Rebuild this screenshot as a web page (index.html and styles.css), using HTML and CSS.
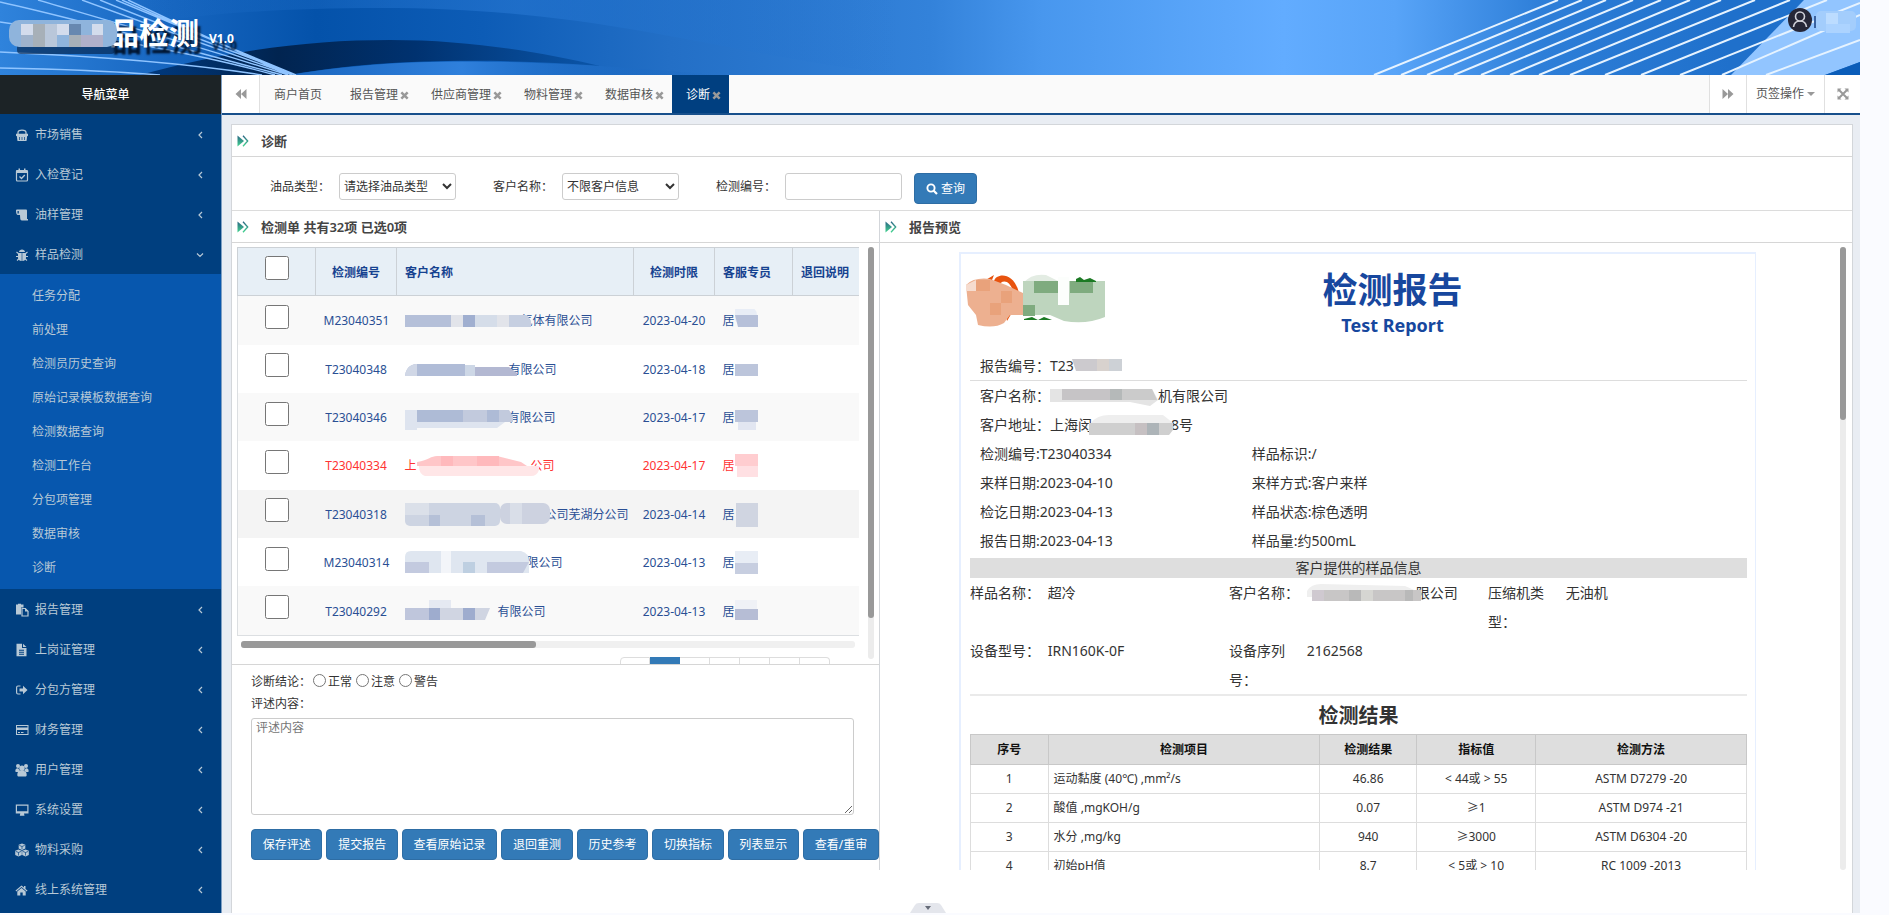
FILE: index.html
```html
<!DOCTYPE html>
<html lang="zh-CN">
<head>
<meta charset="utf-8">
<title>品检测 V1.0</title>
<link rel="stylesheet" href="styles.css">
</head>
<body>
<svg class="defs" aria-hidden="true">
  <symbol id="i-basket" viewBox="0 0 14 14"><path d="M3 6V4.500C3 1.200 11 1.200 11 4.500V6M1 6.500H13" fill="none" stroke="currentColor" stroke-width="1.300"/><path d="M1 6.500H13V8H1ZM1.800 8H12.200L11.500 13H2.500Z"/><path d="M4.500 9V12M7 9V12M9.500 9V12" stroke="#003f7f" stroke-width=".7"/></symbol>
  <symbol id="i-cal" viewBox="0 0 14 14"><rect x="1.500" y="2.500" width="11" height="10.500" rx="1" fill="none" stroke="currentColor" stroke-width="1.200"/><path d="M1 2.500H13V5H1ZM3.500 .5H5V4H3.500ZM9 .5H10.500V4H9Z"/><path d="M4.500 8.500L6.500 10.500L9.800 7" fill="none" stroke="currentColor" stroke-width="1.300"/></symbol>
  <symbol id="i-scroll" viewBox="0 0 14 14"><path d="M1 2.500C1 1.600 1.600 1.500 2.500 1.500H11C11.800 1.500 12 2 12 3V11H13V12.500H7C5.500 12.500 5.300 11.500 5.200 10L5 7H3C1.500 7 1 5 1 2.500ZM2.500 3V5.500H3.800V3Z" fill-rule="evenodd"/></symbol>
  <symbol id="i-bug" viewBox="0 0 14 14"><path d="M4 4C4 .6 10 .6 10 4ZM3 5H6.700V13C4.300 12.800 3 11.500 3 9.500ZM7.300 5H11V9.500C11 11.500 9.700 12.800 7.300 13Z"/><path d="M1.500 4L4 6M12.500 4L10 6M1 8.500H4M13 8.500H10M2 12.500L4.300 10.500M12 12.500L9.700 10.500" stroke="currentColor" stroke-width="1.100"/></symbol>
  <symbol id="i-paste" viewBox="0 0 14 14"><path d="M1 1.500H3V.8H6V1.500H8.500V4.500H6V11.500H1Z"/><path d="M7 5.500H10.300L13 8.200V13H7Z" fill="none" stroke="currentColor" stroke-width="1.200"/><path d="M10 5V8.500H13.500Z"/></symbol>
  <symbol id="i-file" viewBox="0 0 14 14"><path d="M1.500 .8H7V5H11.500V13.200H1.500ZM8 .8L11.500 4H8ZM4 6.800V7.700H9V6.800ZM4 8.800V9.700H9V8.800ZM4 10.800V11.700H9V10.800Z" fill-rule="evenodd"/></symbol>
  <symbol id="i-out" viewBox="0 0 14 14"><path d="M5.500 3H3C2 3 1.600 3.600 1.600 4.500V9.500C1.600 10.500 2 11 3 11H5.500" fill="none" stroke="currentColor" stroke-width="1.200"/><path d="M4.500 5.500H8V2.800L12.500 7L8 11.200V8.500H4.500Z"/></symbol>
  <symbol id="i-card" viewBox="0 0 14 14"><path d="M1 2H13.500V12H1ZM2 3V4.500H12.500V3ZM2 7V11H12.500V7ZM3 9H5V10H3ZM6 9H8.500V10H6Z" fill-rule="evenodd"/></symbol>
  <symbol id="i-users" viewBox="0 0 14 14"><circle cx="3" cy="3" r="2"/><circle cx="11" cy="3" r="2"/><circle cx="7" cy="5.200" r="2.700"/><path d="M.3 8.500C.3 6 1.300 5 3.200 5.200L5 8C3.800 8.200 3.300 8.500 3 9H1ZM13.700 8.500C13.700 6 12.700 5 10.800 5.200L9 8C10.200 8.200 10.700 8.500 11 9H13ZM2.300 12C2.300 9.500 3.300 8 5 7.600H9C10.700 8 11.700 9.500 11.700 12C11.700 13 11 13.500 10 13.500H4C3 13.500 2.300 13 2.300 12Z"/></symbol>
  <symbol id="i-desk" viewBox="0 0 14 14"><path d="M.8 1.500H13.500V10.500H9L9.500 12.700H4.800L5.300 10.500H.8ZM2 2.700V8.300H12.300V2.700Z" fill-rule="evenodd"/></symbol>
  <symbol id="i-cubes" viewBox="0 0 14 14"><path d="M7 .5L10.300 1.800V5.500L7 7L3.700 5.500V1.800ZM3.500 6.500L6.800 7.800V11.900L3.500 13.400L.2 11.900V7.800ZM10.500 6.500L13.800 7.800V11.900L10.500 13.400L7.200 11.900V7.800Z"/><path d="M4.300 2.400L7 3.500L9.700 2.400M7 3.500V6M.8 8.400L3.500 9.500L6.200 8.400M3.500 9.500V12.500M7.800 8.400L10.500 9.500L13.200 8.400M10.500 9.500V12.500" fill="none" stroke="#003f7f" stroke-width=".7"/></symbol>
  <symbol id="i-home" viewBox="0 0 14 14"><path d="M6.500 2.500L9 4.600V3H10.500V6L12.500 7.600L11.800 8.400L6.500 4L1.200 8.400L.5 7.600ZM2.300 8.500L6.500 5L10.700 8.500V12.500H7.700V9.500H5.300V12.500H2.300Z"/></symbol>
  <symbol id="i-left" viewBox="0 0 14 14"><path d="M9 4L6 7L9 10" fill="none" stroke="currentColor" stroke-width="1.200"/></symbol>
  <symbol id="i-down" viewBox="0 0 14 14"><path d="M4 5.500L7 8.500L10 5.500" fill="none" stroke="currentColor" stroke-width="1.200"/></symbol>
  <symbol id="i-x" viewBox="0 0 10 10"><path d="M1.500 1.500L8.500 8.500M8.500 1.500L1.500 8.500" stroke="currentColor" stroke-width="2.800"/></symbol>
  <symbol id="i-back" viewBox="0 0 12 12"><path d="M6 1V11L.5 6ZM11.500 1V11L6 6Z"/></symbol>
  <symbol id="i-fwd" viewBox="0 0 12 12"><path d="M6 1V11L11.500 6ZM.5 1V11L6 6Z"/></symbol>
  <symbol id="i-full" viewBox="0 0 12 12"><path d="M.5 .5H4.500L.5 4.500ZM11.500 .5V4.500L7.500 .5ZM.5 11.500V7.500L4.500 11.500ZM11.500 11.500H7.500L11.500 7.500Z"/><path d="M2 2L10 10M10 2L2 10" stroke="currentColor" stroke-width="2"/></symbol>
  <symbol id="i-search" viewBox="0 0 12 12"><circle cx="5" cy="5" r="3.600" fill="none" stroke="currentColor" stroke-width="1.900"/><path d="M7.500 7.500L11 11" stroke="currentColor" stroke-width="2.200"/></symbol>
  <linearGradient id="mark" x1="0" y1="0" x2="0" y2="1"><stop offset="0" stop-color="#2a6684"/><stop offset="1" stop-color="#42d490"/></linearGradient>
  <symbol id="i-mark" viewBox="0 0 12 12"><path d="M.5 .5L7 6L.5 11.500Z" fill="url(#mark)"/><path d="M6 .8L10.700 6L6 11.200" fill="none" stroke="url(#mark)" stroke-width="1.300"/></symbol>
</svg>

<div class="app">
  <header class="banner">
    <svg class="banner-art" viewBox="0 0 1860 75" preserveAspectRatio="none" aria-hidden="true">
      <defs>
        <linearGradient id="sky"><stop offset="0" stop-color="#2f83dc"/><stop offset=".09" stop-color="#1766c0"/><stop offset=".17" stop-color="#0452aa"/><stop offset=".26" stop-color="#0d5cb6"/><stop offset=".36" stop-color="#236fc6"/><stop offset=".5" stop-color="#3382da"/><stop offset=".56" stop-color="#4897ee"/><stop offset=".69" stop-color="#62acff"/><stop offset=".75" stop-color="#58a4f8"/><stop offset=".83" stop-color="#2d7ed8"/><stop offset=".93" stop-color="#1f70cb"/><stop offset="1" stop-color="#1f70cb"/></linearGradient>
        <linearGradient id="wave"><stop offset="0" stop-color="#003a80"/><stop offset=".3" stop-color="#012450"/><stop offset=".6" stop-color="#003270"/><stop offset="1" stop-color="#0b56aa"/></linearGradient>
        <linearGradient id="low"><stop offset="0" stop-color="#1a66bf"/><stop offset=".4" stop-color="#2f80dc"/><stop offset="1" stop-color="#1460b8" stop-opacity="0"/></linearGradient>
        <linearGradient id="top"><stop offset="0" stop-color="#2474cf" stop-opacity="0"/><stop offset=".5" stop-color="#2474cf" stop-opacity=".7"/><stop offset="1" stop-color="#2474cf" stop-opacity="0"/></linearGradient>
      </defs>
      <rect width="1860" height="75" fill="url(#sky)"/>
      <path d="M140 0H900V75C700 50 600 8 380 8C280 8 200 14 140 24Z" fill="url(#top)"/>
      <path d="M140 75C230 50 310 40 390 40C470 40 540 52 600 66C500 58 380 58 290 75Z" fill="url(#wave)"/>
      <path d="M290 75C400 56 520 58 720 75Z" fill="url(#low)"/>
      <g stroke="#8fc4ff" stroke-width="1.400" fill="none">
        <path d="M0 22C90 35 200 54 275 75M0 2C90 22 180 48 282 75M38 0C120 24 210 50 288 75M82 0C150 25 220 50 292 75M100 0C160 25 230 50 295 75M116 0L296 75M122 0L292 75M128 0L288 75M0 52C90 56 180 62 262 75M0 68C60 69 110 71 160 75"/>
      </g>
      <path d="M1804 0H1860V62L1825 75H1731Z" fill="#92c5ff"/>
      <path d="M1825 75L1860 62V75Z" fill="#0b5db9"/>
      <g stroke="#e6f3ff" stroke-width="2">
        <path d="M1374 75L1558 0M1401 75L1582 0M1427 75L1606 0M1454 75L1633 0M1481 75L1661 0M1510 75L1690 0M1539 75L1721 0M1570 75L1755 0M1605 75L1790 0M1641 75L1827 0M1680 75L1860 3M1722 75L1860 15M1766 75L1860 40"/>
      </g>
    </svg>
    <div class="brand">
      <svg class="brand-mask" viewBox="0 0 108 36" aria-hidden="true"><rect x="8" y="26" width="98" height="10" rx="4" fill="#011c40" opacity=".6"/><rect y="2" width="108" height="27" rx="10" fill="#8fb4dc"/><path d="M12 6H24V17H12ZM48 6H60V17H48ZM83 6H94V17H83Z" fill="#d3dcec"/><path d="M24 6H36V29H24ZM60 17H72V29H60Z" fill="#a7b0b8"/><path d="M36 6H48V29H36Z" fill="#b9c7da"/><path d="M60 6H72V17H60Z" fill="#6788b0"/><path d="M72 17H94V29H72Z" fill="#b0b0ca"/><path d="M12 17H24V29H12Z" fill="#9fb3cc"/></svg>
      <h1>品检测</h1><span class="ver">V1.0</span>
    </div>
    <div class="user">
      <svg class="avatar" viewBox="0 0 24 24" aria-hidden="true"><circle cx="12" cy="12" r="12" fill="#262638"/><path d="M5.500 19C6 15 8 13 12 13S18 15 18.500 19" fill="none" stroke="#d0d0da" stroke-width="1.600"/><circle cx="12" cy="8.500" r="4.500" fill="#262638" stroke="#d0d0da" stroke-width="1.600"/></svg>
      <svg class="user-mask" viewBox="0 0 42 22" aria-hidden="true"><path d="M0 5H2V17H0Z" fill="#3a62a0"/><rect x="2" width="40" height="20" rx="5" fill="#a3cdfc"/><path d="M12 2H24V13H12Z" fill="#bcdcff"/><path d="M12 13H36V22H12Z" fill="#acd3ff"/></svg>
    </div>
  </header>

  <div class="body">
    <nav class="side" aria-label="导航菜单">
      <h2 class="side-title">导航菜单</h2>
      <a class="item" href="#"><svg><use href="#i-basket"/></svg><span>市场销售</span><svg><use href="#i-left"/></svg></a>
      <a class="item" href="#"><svg><use href="#i-cal"/></svg><span>入检登记</span><svg><use href="#i-left"/></svg></a>
      <a class="item" href="#"><svg><use href="#i-scroll"/></svg><span>油样管理</span><svg><use href="#i-left"/></svg></a>
      <a class="item" href="#"><svg><use href="#i-bug"/></svg><span>样品检测</span><svg><use href="#i-down"/></svg></a>
      <div class="sub">
        <a href="#">任务分配</a><a href="#">前处理</a><a href="#">检测员历史查询</a><a href="#">原始记录模板数据查询</a><a href="#">检测数据查询</a><a href="#">检测工作台</a><a href="#">分包项管理</a><a href="#">数据审核</a><a href="#">诊断</a>
      </div>
      <a class="item" href="#"><svg><use href="#i-paste"/></svg><span>报告管理</span><svg><use href="#i-left"/></svg></a>
      <a class="item" href="#"><svg><use href="#i-file"/></svg><span>上岗证管理</span><svg><use href="#i-left"/></svg></a>
      <a class="item" href="#"><svg><use href="#i-out"/></svg><span>分包方管理</span><svg><use href="#i-left"/></svg></a>
      <a class="item" href="#"><svg><use href="#i-card"/></svg><span>财务管理</span><svg><use href="#i-left"/></svg></a>
      <a class="item" href="#"><svg><use href="#i-users"/></svg><span>用户管理</span><svg><use href="#i-left"/></svg></a>
      <a class="item" href="#"><svg><use href="#i-desk"/></svg><span>系统设置</span><svg><use href="#i-left"/></svg></a>
      <a class="item" href="#"><svg><use href="#i-cubes"/></svg><span>物料采购</span><svg><use href="#i-left"/></svg></a>
      <a class="item" href="#"><svg><use href="#i-home"/></svg><span>线上系统管理</span><svg><use href="#i-left"/></svg></a>
    </nav>

    <main class="main">
      <div class="tabs">
        <button class="tool" aria-label="向左"><svg><use href="#i-back"/></svg></button>
        <div class="tab-list">
          <a class="tab plain" href="#">商户首页</a>
          <a class="tab" href="#">报告管理<svg><use href="#i-x"/></svg></a>
          <a class="tab" href="#">供应商管理<svg><use href="#i-x"/></svg></a>
          <a class="tab" href="#">物料管理<svg><use href="#i-x"/></svg></a>
          <a class="tab" href="#">数据审核<svg><use href="#i-x"/></svg></a>
          <a class="tab active" href="#">诊断<svg><use href="#i-x"/></svg></a>
        </div>
        <button class="tool" aria-label="向右"><svg><use href="#i-fwd"/></svg></button>
        <button class="tool ops">页签操作<i class="caret"></i></button>
        <button class="tool full" aria-label="全屏"><svg><use href="#i-full"/></svg></button>
      </div>

      <section class="panel">
        <div class="head"><svg><use href="#i-mark"/></svg><h3>诊断</h3></div>
        <form class="search">
          <label for="oil">油品类型：</label><select id="oil"><option>请选择油品类型</option></select>
          <label for="cust">客户名称：</label><select id="cust"><option>不限客户信息</option></select>
          <label for="no">检测编号：</label><input id="no" type="text">
          <button class="btn query" type="button"><svg><use href="#i-search"/></svg>查询</button>
        </form>
        <div class="panes">
          <section class="left">
            <div class="head"><svg><use href="#i-mark"/></svg><h3>检测单 共有32项 已选0项</h3></div>
            <div class="list">
              <div class="list-main">
                <div class="table-clip">
                  <table class="orders">
                    <colgroup><col class="c-box"><col class="c-no"><col class="c-name"><col class="c-no"><col class="c-box"><col class="c-note"></colgroup>
                    <thead><tr><th><input type="checkbox" aria-label="全选"></th><th>检测编号</th><th class="l">客户名称</th><th>检测时限</th><th class="l">客服专员</th><th class="l">退回说明</th></tr></thead>
                    <tbody>
                      <tr><td><input type="checkbox" aria-label="M23040351"></td><td>M23040351</td><td class="l"><div class="name"><svg class="m m1" viewBox="0 0 126 24"><path d="M0 6H46V18H0Z" fill="#b5c0d9"/><path d="M46 6H58V18H46ZM92 6H104V18H92Z" fill="#e2e4ea"/><path d="M58 6H70V18H58Z" fill="#a0afd0"/><path d="M70 6H92V18H70Z" fill="#d5dde9"/><path d="M104 6H122L126 12V18H104Z" fill="#c6cfe1"/></svg>气体有限公司</div></td><td>2023-04-20</td><td class="l"><div class="name">居<svg class="s" viewBox="0 0 24 24"><ellipse cx="10" cy="6" rx="12" ry="10" fill="#e8edf6"/><path d="M0 6H23V18H3Z" fill="#b6c0d9"/></svg></div></td><td></td></tr>
                      <tr><td><input type="checkbox" aria-label="T23040348"></td><td>T23040348</td><td class="l"><div class="name"><svg class="m m2" viewBox="0 0 114 24"><path d="M0 18C1 8 8 6 12 6H60V18Z" fill="#b0bcd7"/><path d="M0 18C1 8 8 6 12 6V18Z" fill="#d0d7e6"/><path d="M60 7H70V18H60Z" fill="#cdd7e6"/><path d="M70 9H104L112 15V18H70Z" fill="#b3b8d2"/></svg>有限公司</div></td><td>2023-04-18</td><td class="l"><div class="name">居<svg class="s" viewBox="0 0 24 24"><path d="M0 6H23V18H0Z" fill="#bcc5db"/></svg></div></td><td></td></tr>
                      <tr><td><input type="checkbox" aria-label="T23040346"></td><td>T23040346</td><td class="l"><div class="name"><svg class="m m3" viewBox="0 0 108 24"><path d="M0 4H12V24H0ZM12 16H100L92 22H12Z" fill="#dee4ef"/><path d="M12 4H58V16H12ZM82 4H94V16H82Z" fill="#aebbd6"/><path d="M58 4H82V16H58ZM94 4H104L108 10V16H94Z" fill="#c2cadd"/></svg>有限公司</div></td><td>2023-04-17</td><td class="l"><div class="name">居<svg class="s" viewBox="0 0 24 24"><path d="M0 4H23V16H0Z" fill="#bcc5db"/><path d="M3 16H21V24H3Z" fill="#e2e6f1"/></svg></div></td><td></td></tr>
                      <tr class="red"><td><input type="checkbox" aria-label="T23040334"></td><td>T23040334</td><td class="l"><div class="name">上<svg class="m m4" viewBox="0 0 124 24"><path d="M0 8C12 6 14 2 20 2H80L104 8L110 12H0Z" fill="#ffc6c8"/><path d="M2 12H122V16Q120 22 114 22H8Q2 20 2 12Z" fill="#ffe6e7"/><path d="M24 2H36V12H24ZM60 2H82V12H60Z" fill="#ffb9bc"/></svg>公司</div></td><td>2023-04-17</td><td class="l"><div class="name">居<svg class="s" viewBox="0 0 24 24"><path d="M0 0H23V12H0Z" fill="#ffcdd0"/><path d="M2 12H23V23H2Z" fill="#ffe0e3"/></svg></div></td><td></td></tr>
                      <tr class="hover"><td><input type="checkbox" aria-label="T23040318"></td><td>T23040318</td><td class="l"><div class="name"><svg class="m m5" viewBox="0 0 145 24"><rect width="95" height="23" rx="5" fill="#cdd4e2"/><path d="M0 0H24V12H0Z" fill="#dbe0e9"/><path d="M24 12H35V23H24ZM66 12H80V23H66Z" fill="#b5c0d7"/><rect x="95" width="50" height="21" rx="7" fill="#cdd2e0"/><path d="M105 0H117V21H105Z" fill="#d9dee8"/></svg>公司芜湖分公司</div></td><td>2023-04-14</td><td class="l"><div class="name">居<svg class="s" viewBox="0 0 24 24"><path d="M1 0H23V24H1Z" fill="#d0d5e1"/></svg></div></td><td></td></tr>
                      <tr><td><input type="checkbox" aria-label="M23040314"></td><td>M23040314</td><td class="l"><div class="name"><svg class="m m6" viewBox="0 0 126 24"><path d="M0 6Q0 0 6 0H116Q124 2 124 10V22H0Z" fill="#dfe6f0"/><path d="M36 0H46V22H36Z" fill="#f3f5f9"/><path d="M0 11H24V22H0ZM82 11H124L118 22H82Z" fill="#c3cadf"/><path d="M58 11H70V22H58Z" fill="#becfe1"/></svg>限公司</div></td><td>2023-04-13</td><td class="l"><div class="name">居<svg class="s" viewBox="0 0 24 24"><path d="M0 0H23V12H0Z" fill="#e8edf5"/><path d="M0 12H23V23H0Z" fill="#c7cee0"/></svg></div></td><td></td></tr>
                      <tr><td><input type="checkbox" aria-label="T23040292"></td><td>T23040292</td><td class="l"><div class="name"><svg class="m m7" viewBox="0 0 98 24"><path d="M24 0H46V10H24Z" fill="#e5e9f2"/><path d="M0 8H24V20H0Z" fill="#bfc6dc"/><path d="M24 8H35V20H24ZM58 8H70V20H58Z" fill="#9eacce"/><path d="M35 8H58V20H35ZM70 8H85L80 20H70Z" fill="#d0d5e2"/></svg>有限公司</div></td><td>2023-04-13</td><td class="l"><div class="name">居<svg class="s" viewBox="0 0 24 24"><path d="M0 0H22V9H0Z" fill="#eff1f6"/><path d="M0 9H23V20H0Z" fill="#b6bdd5"/></svg></div></td><td></td></tr>
                    </tbody>
                  </table>
                </div>
                <div class="hbar"><div class="thumb"></div></div>
                <nav class="pager" aria-label="分页"><button aria-label="上一页"></button><button class="on" aria-label="1"></button><button aria-label="2"></button><button aria-label="3"></button><button aria-label="4"></button><button aria-label="5"></button><button aria-label="下一页"></button></nav>
              </div>
              <div class="vbar list-bar"><div class="thumb"></div></div>
            </div>
            <form class="review">
              <div class="line"><span class="lead">诊断结论：</span><input type="radio" name="r" id="r1"><label for="r1">正常</label><input type="radio" name="r" id="r2"><label for="r2">注意</label><input type="radio" name="r" id="r3"><label for="r3">警告</label></div>
              <label class="line" for="memo">评述内容：</label>
              <textarea id="memo" placeholder="评述内容"></textarea>
              <div class="acts"><button class="btn" type="button">保存评述</button><button class="btn" type="button">提交报告</button><button class="btn" type="button">查看原始记录</button><button class="btn" type="button">退回重测</button><button class="btn" type="button">历史参考</button><button class="btn" type="button">切换指标</button><button class="btn" type="button">列表显示</button><button class="btn" type="button">查看/重审</button></div>
            </form>
          </section>

          <section class="right">
            <div class="head"><svg><use href="#i-mark"/></svg><h3>报告预览</h3></div>
            <div class="preview">
              <article class="paper">
                <header class="paper-head">
                  <svg class="logo" viewBox="0 0 140 56" aria-hidden="true"><path d="M18 8L28 2L24 12ZM28 8C30 0 48 -2 53 20L47 18C43 6 36 6 31 14ZM40 42L47 38L41 48Z" fill="#e8530e"/><path d="M0 12Q8 4 24 6L40 12L57 20V42H44L38 50Q28 56 12 52L10 42L2 32Z" fill="#edb090"/><path d="M0 12L10 7V18H0Z" fill="#f6dccf"/><path d="M10 7H24V18H10ZM24 30H35V42H24ZM35 18H46V30H35Z" fill="#e9a27b"/><path d="M57 10Q66 0 80 2L92 8V18H57Z" fill="#e3ece3"/><path d="M57 8H92V32H103V8H139V44Q120 52 98 48L84 42H57Z" fill="#bed5be"/><path d="M92 4H103V32H92Z" fill="#fcfefc"/><path d="M68 8H92V20H68ZM104 8H127V20H104ZM57 32H69V43H57Z" fill="#7fab7f"/><path d="M110 6L114 4L118 7L124 5L130 8V9H110ZM58 46L66 44L72 47L78 44L86 47H58Z" fill="#1c7a24"/></svg>
                  <div class="paper-title"><h2>检测报告</h2><p>Test Report</p></div>
                </header>
                <div class="facts first"><p>报告编号：T23<svg class="k k1" viewBox="0 0 50 14"><path d="M0 1H50V13H4Z" fill="#cccace"/><path d="M25 1H37V13H25Z" fill="#d8d2ce"/><path d="M37 1H50V13H37Z" fill="#cdd1d6"/></svg></p></div>
                <div class="facts">
                  <p class="wide">客户名称：<svg class="k k2" viewBox="0 0 108 20"><path d="M0 3H102L108 14L100 20L80 16H0Z" fill="#e4e4e4"/><path d="M12 3H60V14H12Z" fill="#c6c4c6"/><path d="M60 3H72V14H60Z" fill="#b5b9b9"/><path d="M72 3H102L107 14H72Z" fill="#cbcbcb"/></svg>机有限公司</p>
                  <p class="wide">客户地址：上海闵<svg class="k k3" viewBox="0 0 84 24"><path d="M2 10Q8 2 20 2H74L84 10V14H0Z" fill="#eeeeee"/><path d="M0 10H84V17L80 22H0Z" fill="#cfcfcf"/><path d="M46 10H58V22H46Z" fill="#c6c0c2"/><path d="M58 10H70V22H58Z" fill="#adb4b8"/></svg>8号</p>
                  <p>检测编号:T23040334</p><p>样品标识:/</p>
                  <p>来样日期:2023-04-10</p><p>来样方式:客户来样</p>
                  <p>检讫日期:2023-04-13</p><p>样品状态:棕色透明</p>
                  <p>报告日期:2023-04-13</p><p>样品量:约500mL</p>
                </div>
                <h4 class="band">客户提供的样品信息</h4>
                <div class="sample">
                  <span>样品名称：</span><span>超冷</span><span>客户名称：</span><span><svg class="k k4" viewBox="0 0 114 18"><path d="M0 8Q4 1 14 1L98 3L114 10V14H0Z" fill="#efefef"/><path d="M5 7H114V18H5Z" fill="#c8c6c6"/><path d="M5 7H17V18H5Z" fill="#cfc9d0"/><path d="M42 7H54V18H42ZM98 7H106V18H98Z" fill="#b9b9b9"/><path d="M54 7H66V18H54Z" fill="#d6d6d2"/></svg>限公司</span><span>压缩机类型：</span><span>无油机</span>
                  <span>设备型号：</span><span>IRN160K-0F</span><span>设备序列号：</span><span>2162568</span>
                </div>
                <h3 class="result-title">检测结果</h3>
                <table class="results">
                  <colgroup><col class="w-no"><col class="w-item"><col class="w-val"><col class="w-ref"><col class="w-std"></colgroup>
                  <thead><tr><th>序号</th><th>检测项目</th><th>检测结果</th><th>指标值</th><th>检测方法</th></tr></thead>
                  <tbody>
                    <tr><td>1</td><td class="l">运动黏度 (40℃) ,mm²/s</td><td>46.86</td><td>&lt; 44或 &gt; 55</td><td>ASTM D7279 -20</td></tr>
                    <tr><td>2</td><td class="l">酸值 ,mgKOH/g</td><td>0.07</td><td>≥1</td><td>ASTM D974 -21</td></tr>
                    <tr><td>3</td><td class="l">水分 ,mg/kg</td><td>940</td><td>≥3000</td><td>ASTM D6304 -20</td></tr>
                    <tr><td>4</td><td class="l">初始pH值</td><td>8.7</td><td>&lt; 5或 &gt; 10</td><td>RC 1009 -2013</td></tr>
                  </tbody>
                </table>
              </article>
              <div class="vbar"><div class="thumb"></div></div>
            </div>
          </section>
        </div>
        <button class="handle" aria-label="展开"><svg viewBox="0 0 36 10"><path d="M0 10L5 2Q6 0 9 0H27Q30 0 31 2L36 10Z" fill="#e4e6ec"/><path d="M15 3H21L18 7Z" fill="#666c78"/></svg></button>
      </section>
    </main>
  </div>
</div>
</body>
</html>
```

FILE: styles.css
```css
* { box-sizing: border-box; }
body {
  margin: 0;
  background: #fafbff;
  color: #333;
  font: 12px/20px "Noto Sans", "Noto Sans CJK SC", sans-serif;
}
h1, h2, h3, h4, p { margin: 0; }
a { color: inherit; text-decoration: none; }
button, input, select, textarea { font: inherit; color: inherit; margin: 0; }
button { border: 0; padding: 0; background: none; }
svg { display: block; flex: none; fill: currentColor; }
.defs { position: absolute; width: 0; height: 0; }

.app {
  display: flex;
  flex-direction: column;
  height: calc(100vh - 2px);
  margin-right: 29px;
}

/* banner */
.banner {
  position: relative;
  display: flex;
  justify-content: space-between;
  height: 75px;
  flex: none;
  color: #fff;
}
.banner-art { position: absolute; inset: 0; width: 100%; height: 100%; }
.brand { position: relative; display: flex; align-items: flex-start; padding: 12px 0 0 9px; }
.brand-mask { position: relative; z-index: 1; width: 108px; height: 36px; margin: 6px -8px 0 0; }
.brand h1 { font-size: 30px; line-height: 42px; text-shadow: 3px 7px 2px #011530; }
.ver { margin: 17px 0 0 10px; font-weight: 700; text-shadow: 3px 7px 2px #011530; }
.user { position: relative; display: flex; gap: 2px; padding: 8px 4px 0 0; }
.avatar { width: 24px; height: 24px; }
.user-mask { width: 42px; height: 22px; margin-top: 3px; }

.body { display: flex; flex: 1; min-height: 0; }

/* sidebar */
.side { width: 221px; flex: none; background: #003f7f; color: #b8c9d6; overflow: hidden; }
.side-title {
  background: #1c2326;
  color: #fff;
  font-size: 12px;
  font-weight: 500;
  line-height: 39px;
  padding-right: 10px;
  text-align: center;
}
.item { display: flex; align-items: center; gap: 6px; height: 40px; padding: 2px 14px 0 15px; }
.item svg { width: 14px; height: 14px; }
.item span { flex: 1; }
.sub { background: #0757ae; padding: 5px 0 4px; }
.sub a { display: block; line-height: 34px; padding-left: 32px; }

/* tabs */
.main { display: flex; flex: 1; flex-direction: column; min-width: 0; background: #e9edf3; border-left: 1px solid #7d9fc4; }
.tabs { display: flex; height: 40px; flex: none; background: #fafafa; border-bottom: 2px solid #174f8b; color: #555; }
.tab-list { display: flex; flex: 1; min-width: 0; }
.tab { display: flex; align-items: center; gap: 2px; padding: 2px 8px 0 14px; }
.tab svg { width: 9px; height: 9px; color: #999; }
.tab.plain { padding-right: 14px; }
.tab.active { background: #003f80; color: #fff; }
.tool {
  display: flex;
  align-items: center;
  justify-content: center;
  width: 38px;
  background: #fff;
  color: #999;
  border-right: 1px solid #e0e0e0;
}
.tool svg { width: 12px; height: 12px; }
.tab-list + .tool { border-left: 1px solid #e0e0e0; }
.tool.ops { width: 78px; gap: 3px; color: #555; }
.tool.full { width: 35px; border-right: 0; }
.caret { border: 4px solid transparent; border-top-color: #999; border-bottom: 0; }

/* page panel */
.panel {
  position: relative;
  display: flex;
  flex: 1;
  flex-direction: column;
  min-height: 0;
  margin: 9px 7px 0 9px;
  padding-bottom: 43px;
  background: #fff;
  border: 1px solid #d3d6da;
  border-bottom: 0;
}
.head { display: flex; align-items: center; gap: 12px; height: 32px; flex: none; padding-left: 5px; border-bottom: 1px solid #d6d6d6; }
.head svg { width: 12px; height: 12px; }
.head h3 { font-size: 13px; font-weight: 600; color: #444; }
.search { display: flex; height: 54px; flex: none; padding: 16px 0 0 38px; border-bottom: 1px solid #dcdcdc; }
.search label { width: 69px; line-height: 27px; }
.search select, .search input { width: 117px; height: 27px; background: #fff; border: 1px solid #ccc; border-radius: 3px; }
.search select { margin-right: 37px; }
.btn {
  display: flex;
  align-items: center;
  justify-content: center;
  height: 31px;
  padding: 0 11px;
  background: #337ab7;
  border: 1px solid #2e6da4;
  border-radius: 4px;
  color: #fff;
  white-space: nowrap;
}
.query { gap: 3px; margin-left: 12px; }
.query svg { width: 12px; height: 12px; }

.panes { display: flex; flex: 1; min-height: 0; }
.left { display: flex; flex-direction: column; width: 40%; min-width: 0; border-right: 1px solid #d3d6da; }
.right { display: flex; flex: 1; flex-direction: column; min-width: 0; }

/* scroll tracks */
.vbar { width: 6px; flex: none; background: #ececec; border-radius: 3px; }
.hbar { height: 7px; margin: 5px 4px 0; background: #f0f0f0; border-radius: 3px; }
.thumb { background: #999; border-radius: 3px; }
.list-bar { height: 412px; }
.list-bar .thumb { height: 371px; }
.hbar .thumb { width: 48%; height: 7px; }
.preview .thumb { height: 173px; }

/* order list */
.list { display: flex; flex: 1; gap: 9px; min-height: 0; padding: 4px 5px 0; overflow: hidden; }
.list-main { flex: 1; min-width: 0; }
.table-clip { overflow: hidden; }
.orders {
  width: 720px;
  height: 389px;
  table-layout: fixed;
  border-collapse: collapse;
  border: 1px solid #dcdfe2;
  color: #2a4f94;
}
.c-box { width: 78px; }
.c-no { width: 81px; }
.c-name { width: 237px; }
.orders th, .orders td { padding: 2px 8px 0; text-align: center; white-space: nowrap; }
.orders th { height: 48px; background: #e7eff6; border: 1px solid #ccd1d6; color: #164290; font-weight: 600; }
.orders .l { text-align: left; }
.orders tbody tr:nth-child(odd) { background: #f9f9f9; }
.orders tbody .hover.hover { background: #f4f4f4; }
.orders .red { color: #f33; }
.orders input { display: block; width: 24px; height: 24px; margin: 0 auto 9px; }
.name { display: flex; align-items: center; }
.m, .s, .k { position: relative; height: 24px; }
.m { margin-right: -10px; }
.s { width: 24px; }
.m1 { width: 126px; }
.m2 { width: 114px; }
.m3 { width: 108px; margin-right: -5px; }
.m4 { width: 124px; }
.m5 { width: 145px; margin-right: -5px; }
.m6 { width: 126px; margin-right: -4px; }
.m7 { width: 98px; margin-right: -5px; }

.pager { display: flex; justify-content: flex-end; margin: 9px 29px 0 0; }
.pager button { width: 30px; height: 30px; border: 1px solid #ddd; border-left: 0; }
.pager button:first-child { border-left: 1px solid #ddd; border-radius: 4px 0 0; }
.pager button:last-child { border-radius: 0 4px 0 0; }
.pager .on { background: #337ab7; border-color: #337ab7; }

/* review form */
.review { flex: none; padding: 6px 0 10px 19px; border-top: 1px solid #d6d6d6; }
.line { display: flex; align-items: center; line-height: 22px; }
.lead { width: 62px; }
.line input { width: 13px; height: 13px; margin: 0 2px 4px 0; }
.line label { margin-right: 4px; }
.review textarea {
  display: block;
  width: calc(100% - 25px);
  height: 97px;
  margin-top: 3px;
  padding: 0 4px;
  border: 1px solid #ccc;
  border-radius: 3px;
  line-height: 18px;
}
.acts { display: flex; gap: 4px; margin-top: 14px; }
.acts .btn { padding: 0 10px; flex: 1 0 auto; }

/* report preview */
.preview { display: flex; flex: 1; min-height: 0; padding: 4px 6px 0 79px; overflow: hidden; }
.paper {
  flex: 1;
  min-width: 0;
  margin: 5px 84px 0 0;
  border: solid #e6efff;
  border-width: 2px 1px 0 2px;
  padding: 0 8px 0 9px;
  font-size: 14px;
  line-height: 29px;
}
.paper-head { display: flex; height: 98px; padding: 16px 68px 0 0; }
.logo { width: 140px; height: 56px; margin: 3px 0 0 -4px; }
.paper-title { flex: 1; text-align: center; color: #17479e; font-weight: 700; }
.paper-title h2 { font-size: 35px; line-height: 40px; }
.paper-title p { margin-top: 3px; font-size: 18px; line-height: 24px; }
.facts { display: grid; grid-template-columns: 272fr 496fr; padding-left: 10px; }
.facts.first { line-height: 28px; border-bottom: 1px solid #ddd; }
.facts p { display: flex; align-items: center; }
.facts .wide { grid-column: 1 / -1; }
.k1 { width: 50px; height: 14px; margin: 0 0 2px -2px; }
.k2 { width: 108px; height: 20px; }
.k3 { width: 84px; margin: 0 -2px 0 -3px; }
.k4 { width: 114px; height: 18px; margin-right: -5px; }
.band { margin-top: 3px; background: #dedede; font-size: 14px; font-weight: 400; line-height: 20px; text-align: center; }
.sample { display: grid; grid-template-columns: 3fr 7fr 3fr 7fr 3fr 7fr; grid-auto-rows: 58px; border-bottom: 2px solid #eaeaea; }
.sample span { display: flex; align-items: flex-start; padding-right: 5px; }
.sample .k { margin-top: 5px; }
.result-title { padding-top: 2px; font-size: 20px; line-height: 36px; text-align: center; }
.results { width: 100%; table-layout: fixed; border-collapse: collapse; font-size: 12px; line-height: 20px; }
.w-no { width: 10%; }
.w-item { width: 35%; }
.w-val { width: 97px; }
.w-ref { width: 119px; }
.results th, .results td { height: 29px; padding: 0 5px; border: 1px solid #ddd; text-align: center; }
.results th { height: 30px; background: #dedede; border-color: #c8c8c8; color: #111; font-weight: 700; }
.results .l { text-align: left; }

.handle { position: absolute; left: 50%; bottom: 0; width: 36px; margin-left: -132px; }
.handle svg { width: 36px; height: 10px; }
```
